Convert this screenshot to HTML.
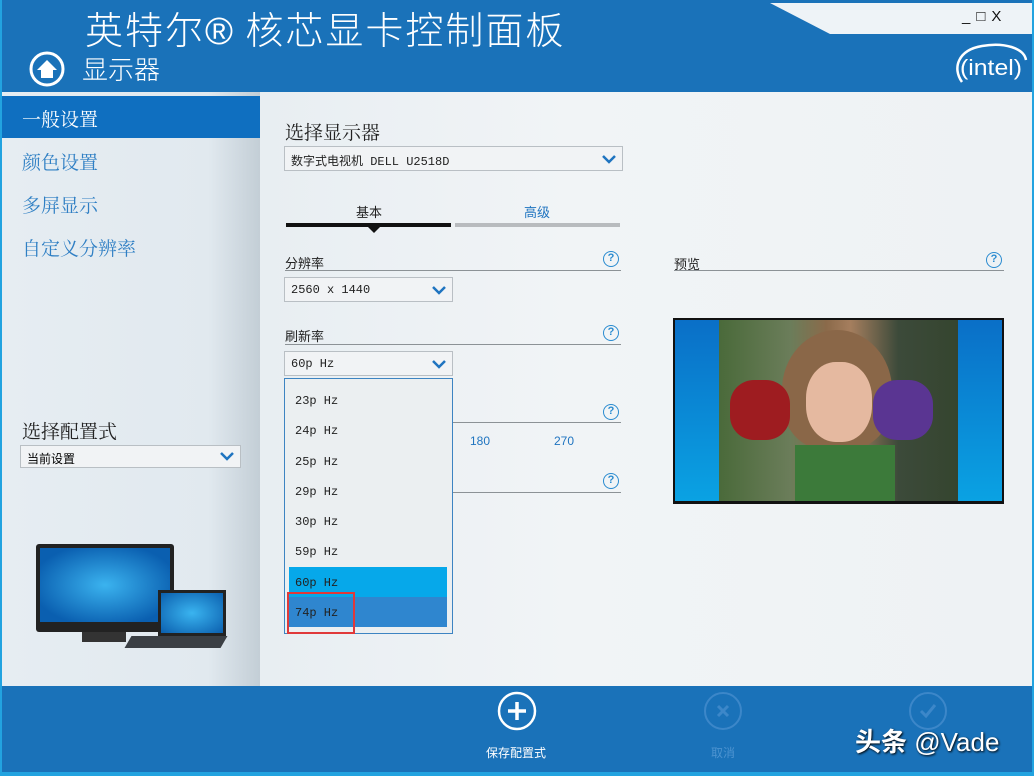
<!DOCTYPE html>
<html><head><meta charset="utf-8"><style>
*{margin:0;padding:0;box-sizing:border-box}
body{width:1034px;height:776px;overflow:hidden;background:#22a3e0;font-family:"Liberation Sans","Noto Sans CJK SC",sans-serif;position:relative}
.abs{position:absolute}
#hdr{left:2px;top:0;width:1030px;height:92px;background:#1a72b9}
#main{left:260px;top:92px;width:772px;height:594px;background:linear-gradient(90deg,#e8eef2,#f1f4f6 40%,#eef2f4)}
#side{left:2px;top:92px;width:258px;height:594px;background:linear-gradient(90deg,#e6edf2,#e1e9ef 80%,#c3ced6)}
#foot{left:2px;top:686px;width:1030px;height:86px;background:#1a72b9}
.serif{font-family:"Liberation Serif","Noto Serif CJK SC",serif}
.mono{font-family:"Liberation Mono","Noto Sans CJK SC",monospace;font-size:12px;color:#222}
.nav{left:22px;font-size:19px;color:#2f7fc4}
.sel{border:1px solid #b9bfc4;background:#f1f3f5}
.chev{position:absolute;right:6px;top:5px}
.lbl{font-size:13px;color:#222}
.line{height:1px;background:#8c9296}
.q{width:16px;height:16px;border:1.5px solid #2a8bd0;border-radius:50%;color:#2a8bd0;font-size:11px;font-weight:bold;text-align:center;line-height:13px}
.opt{left:295px;font-size:12px}
</style></head><body>
<div id="hdr" class="abs"></div>
<svg class="abs" style="left:770px;top:0" width="262" height="34"><polygon points="0,3 262,3 262,34 60,34" fill="#eef3f7"/></svg>
<div class="abs" style="left:85px;top:0px;font-size:38px;color:#fff;letter-spacing:2px;font-family:'Noto Sans CJK SC',sans-serif;font-weight:300">英特尔<span style="font-family:'Liberation Sans'">®</span> 核芯显卡控制面板</div>
<div class="abs" style="left:962px;top:8px;font-size:15px;color:#111;letter-spacing:6px">_□X</div>
<svg class="abs" style="left:28px;top:50px" width="38" height="38"><circle cx="19" cy="19" r="16" fill="none" stroke="#fff" stroke-width="3"/><path d="M9 20 L19 10 L29 20 H25 V28 H13 V20Z" fill="#fff"/></svg>
<div class="abs" style="left:82px;top:50px;font-size:26px;color:#fff;font-family:'Noto Sans CJK SC',sans-serif;font-weight:300">显示器</div>
<svg class="abs" style="left:952px;top:38px" width="80" height="54"><path d="M10 44 C0 30 6 12 30 8 C52 4 72 10 74 22" fill="none" stroke="#fff" stroke-width="2.5"/><text x="8" y="37" fill="#fff" font-size="22" font-family="Liberation Sans" textLength="62" lengthAdjust="spacingAndGlyphs">(intel)</text></svg>
<div id="side" class="abs"></div>
<div class="abs" style="left:2px;top:96px;width:258px;height:42px;background:#0f6fc0"></div>
<div class="abs serif" style="left:22px;top:105px;font-size:19px;color:#fff">一般设置</div>
<div class="abs nav serif" style="top:148px">颜色设置</div>
<div class="abs nav serif" style="top:191px">多屏显示</div>
<div class="abs nav serif" style="top:234px">自定义分辨率</div>
<div class="abs serif" style="left:22px;top:417px;font-size:19px;color:#222">选择配置式</div>
<div class="abs sel" style="left:20px;top:445px;width:221px;height:23px"><span style="position:absolute;left:6px;top:4px;font-size:12px">当前设置</span><svg class="chev" width="14" height="10"><path d="M1 2 L7 8 L13 2" stroke="#1f74c0" stroke-width="2.5" fill="none"/></svg></div>
<div class="abs" style="left:36px;top:544px;width:138px;height:88px;background:#222;border-radius:3px"></div>
<div class="abs" style="left:40px;top:548px;width:130px;height:74px;background:radial-gradient(ellipse at 50% 50%,#3bb3ef,#0a5fb0 80%)"></div>
<div class="abs" style="left:82px;top:632px;width:44px;height:10px;background:#333"></div>
<div class="abs" style="left:158px;top:590px;width:68px;height:47px;background:#222"></div>
<div class="abs" style="left:161px;top:593px;width:62px;height:40px;background:radial-gradient(#3ab4f0,#0b5fae)"></div>
<div class="abs" style="left:128px;top:636px;width:96px;height:12px;background:#3b3f44;transform:skewX(-30deg)"></div>
<div id="main" class="abs"></div>
<div class="abs serif" style="left:285px;top:118px;font-size:19px;color:#222">选择显示器</div>
<div class="abs sel" style="left:284px;top:146px;width:339px;height:25px"><span class="mono" style="position:absolute;left:6px;top:5px">数字式电视机 DELL U2518D</span><svg class="chev" width="14" height="10" style="top:7px"><path d="M1 2 L7 8 L13 2" stroke="#1f74c0" stroke-width="2.5" fill="none"/></svg></div>
<div class="abs" style="left:356px;top:202px;font-size:13px;color:#222">基本</div>
<div class="abs" style="left:524px;top:202px;font-size:13px;color:#1f74c0">高级</div>
<div class="abs" style="left:286px;top:223px;width:165px;height:4px;background:#111"></div>
<svg class="abs" style="left:367px;top:226px" width="14" height="8"><polygon points="0,0 14,0 7,7" fill="#111"/></svg>
<div class="abs" style="left:455px;top:223px;width:165px;height:4px;background:#b8bbbe"></div>
<div class="abs lbl" style="left:285px;top:253px">分辨率</div>
<div class="abs q" style="left:603px;top:251px">?</div>
<div class="abs line" style="left:285px;top:270px;width:336px"></div>
<div class="abs sel" style="left:284px;top:277px;width:169px;height:25px"><span class="mono" style="position:absolute;left:6px;top:5px">2560 x 1440</span><svg class="chev" width="14" height="10" style="top:7px"><path d="M1 2 L7 8 L13 2" stroke="#1f74c0" stroke-width="2.5" fill="none"/></svg></div>
<div class="abs lbl" style="left:285px;top:326px">刷新率</div>
<div class="abs q" style="left:603px;top:325px">?</div>
<div class="abs line" style="left:285px;top:344px;width:336px"></div>
<div class="abs sel" style="left:284px;top:351px;width:169px;height:25px"><span class="mono" style="position:absolute;left:6px;top:5px">60p Hz</span><svg class="chev" width="14" height="10" style="top:7px"><path d="M1 2 L7 8 L13 2" stroke="#1f74c0" stroke-width="2.5" fill="none"/></svg></div>
<div class="abs q" style="left:603px;top:404px">?</div>
<div class="abs line" style="left:453px;top:422px;width:168px"></div>
<div class="abs" style="left:470px;top:434px;font-size:12px;color:#1f74c0">180</div>
<div class="abs" style="left:554px;top:434px;font-size:12px;color:#1f74c0">270</div>
<div class="abs q" style="left:603px;top:473px">?</div>
<div class="abs line" style="left:453px;top:492px;width:168px"></div>
<div class="abs" style="left:284px;top:378px;width:169px;height:256px;background:#ebeff1;border:1px solid #3d84c2"></div>
<div class="abs mono opt" style="top:394px">23p Hz</div>
<div class="abs mono opt" style="top:424px">24p Hz</div>
<div class="abs mono opt" style="top:455px">25p Hz</div>
<div class="abs mono opt" style="top:485px">29p Hz</div>
<div class="abs mono opt" style="top:515px">30p Hz</div>
<div class="abs mono opt" style="top:545px">59p Hz</div>
<div class="abs" style="left:289px;top:567px;width:158px;height:30px;background:#06a8ea"></div>
<div class="abs" style="left:289px;top:597px;width:158px;height:30px;background:#2f86cf"></div>
<div class="abs mono opt" style="top:576px">60p Hz</div>
<div class="abs mono opt" style="top:606px">74p Hz</div>
<div class="abs" style="left:287px;top:592px;width:68px;height:42px;border:2.5px solid #e0393a"></div>
<div class="abs lbl" style="left:674px;top:254px">预览</div>
<div class="abs q" style="left:986px;top:252px">?</div>
<div class="abs line" style="left:674px;top:270px;width:330px"></div>
<div class="abs" style="left:673px;top:318px;width:331px;height:186px;background:#111"></div>
<div class="abs" style="left:675px;top:320px;width:44px;height:181px;background:linear-gradient(#0a6fc7,#0aa2e3)"></div>
<div class="abs" style="left:958px;top:320px;width:44px;height:181px;background:linear-gradient(#0a6fc7,#0aa2e3)"></div>
<div class="abs" style="left:719px;top:320px;width:239px;height:181px;background:linear-gradient(90deg,#4a6a3a,#6b7d5a 30%,#8b6a4a 45%,#a57e5e 55%,#3c4a3a 75%,#35452f)"></div>
<div class="abs" style="left:782px;top:330px;width:110px;height:120px;border-radius:50% 50% 40% 40%;background:#8a6748"></div>
<div class="abs" style="left:806px;top:362px;width:66px;height:80px;border-radius:45%;background:#e5b9a0"></div>
<div class="abs" style="left:730px;top:380px;width:60px;height:60px;border-radius:40%;background:#9e1c20"></div>
<div class="abs" style="left:873px;top:380px;width:60px;height:60px;border-radius:40%;background:#5a3592"></div>
<div class="abs" style="left:795px;top:445px;width:100px;height:56px;background:#3c7a3a"></div>
<div id="foot" class="abs"></div>
<svg class="abs" style="left:496px;top:690px" width="42" height="42"><circle cx="21" cy="21" r="18" fill="none" stroke="#fff" stroke-width="2.5"/><path d="M21 12V30M12 21H30" stroke="#fff" stroke-width="3.5"/></svg>
<div class="abs" style="left:486px;top:744px;font-size:12px;color:#fff">保存配置式</div>
<svg class="abs" style="left:702px;top:690px" width="42" height="42"><circle cx="21" cy="21" r="18" fill="none" stroke="#3c87c9" stroke-width="2"/><path d="M16 16L26 26M26 16L16 26" stroke="#3c87c9" stroke-width="3"/></svg>
<div class="abs" style="left:711px;top:744px;font-size:12px;color:#4c93d0">取消</div>
<svg class="abs" style="left:907px;top:690px" width="42" height="42"><circle cx="21" cy="21" r="18" fill="none" stroke="#3c87c9" stroke-width="2"/><path d="M14 21L19 26L28 15" stroke="#3c87c9" stroke-width="3" fill="none"/></svg>
<div class="abs" style="left:855px;top:722px;font-size:26px;color:#fff;text-shadow:1px 1px 2px #000"><b>头条</b> @Vade</div>
</body></html>
